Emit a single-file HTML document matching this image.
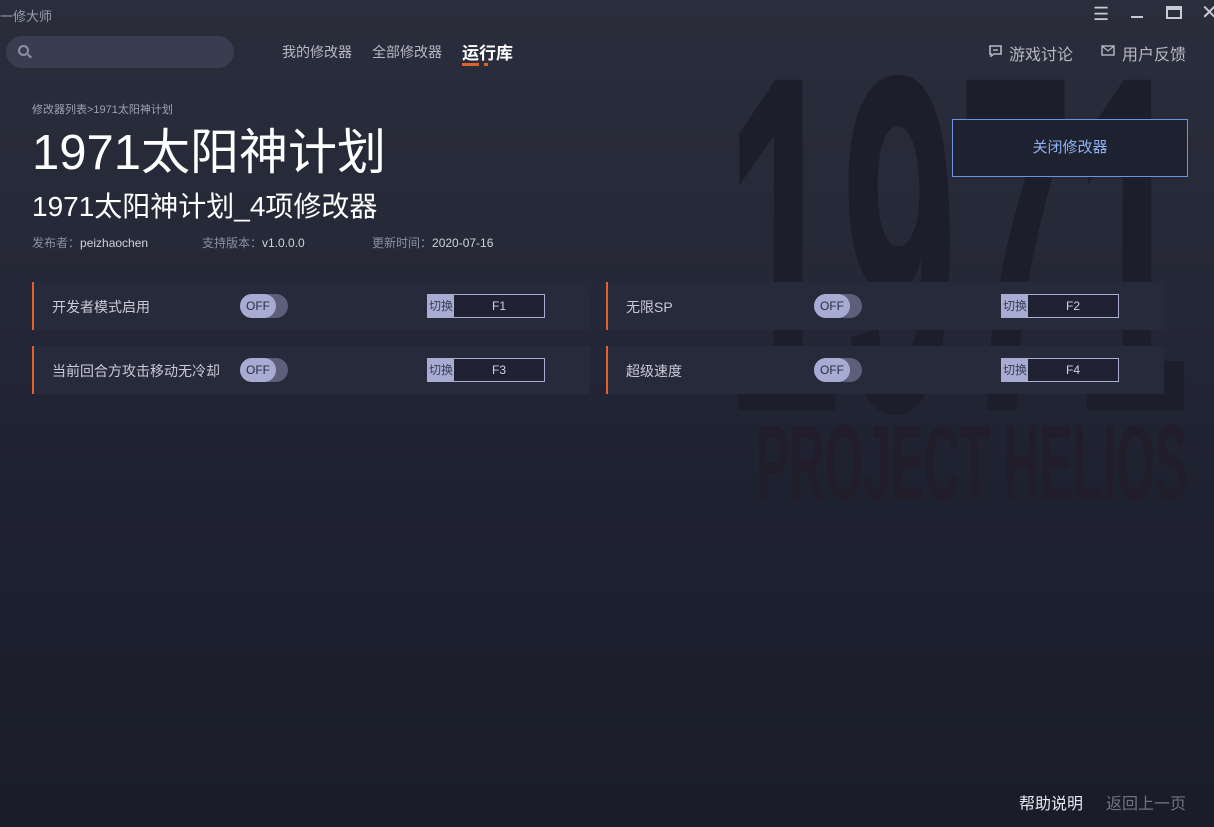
<!DOCTYPE html>
<html><head><meta charset="utf-8"><style>
*{margin:0;padding:0;box-sizing:border-box}
body{width:1214px;height:827px;overflow:hidden;position:relative;font-family:"Liberation Sans","Noto Sans CJK SC",sans-serif;background:linear-gradient(#2a2d3b 0%,#252836 35%,#1e2130 60%,#1a1c29 100%);color:#fff}
.a{position:absolute;white-space:nowrap}
.row{position:absolute;height:48px;background:#272a3b;border-left:2px solid #e0622a}
.row .l{position:absolute;left:18px;top:15px;font-size:14px;color:#c9cbd6}
.tg{position:absolute;top:12px;width:48px;height:24px;border-radius:12px;background:#5b5f7a}
.tg span{position:absolute;left:0;top:0;width:36px;height:24px;border-radius:12px;background:#a8acd2;color:#2a2d45;font-size:12px;line-height:24px;text-align:center}
.key{position:absolute;top:12px;width:118px;height:24px;border:1px solid #a9acd0;background:#202234}
.key b{position:absolute;left:0;top:0;width:26px;height:22px;background:#a8acd2;color:#3a3d55;font-weight:normal;font-size:12px;line-height:22px;text-align:center}
.key i{position:absolute;left:26px;right:0;top:0;font-style:normal;font-size:12px;line-height:22px;text-align:center;color:#d0d2e0}
</style></head><body>
<svg class="a" style="left:0;top:0" width="1214" height="827">
<text x="725" y="410" font-family="Liberation Sans" font-weight="bold" font-size="480" fill="#1c1e2b" textLength="465" lengthAdjust="spacingAndGlyphs">1971</text>
<text x="756" y="500" font-family="Liberation Sans" font-weight="bold" font-size="108" fill="#221d2a" textLength="432" lengthAdjust="spacingAndGlyphs">PROJECT HELIOS</text>
</svg>
<div class="a" style="left:0;top:6px;font-size:13px;color:#9a9dab">一修大师</div>
<div class="a" style="left:1093px;top:4px;font-size:18px;color:#c8cad4">☰</div>
<div class="a" style="left:1131px;top:16px;width:12px;height:2px;background:#c8cad4"></div>
<div class="a" style="left:1166px;top:6px;width:16px;height:13px;border:2px solid #c8cad4;border-top-width:4px"></div>
<div class="a" style="left:1201px;top:0px;font-size:20px;color:#c8cad4">✕</div>
<div class="a" style="left:6px;top:36px;width:228px;height:32px;border-radius:16px;background:#3a3d4f"></div>
<div class="a" style="left:18px;top:45px;width:11px;height:11px;border:2px solid #8e91a3;border-radius:50%"></div>
<div class="a" style="left:27px;top:55px;width:5px;height:2px;background:#8e91a3;transform:rotate(45deg)"></div>
<div class="a" style="left:282px;top:42px;font-size:14px;color:#b6b8c6">我的修改器</div>
<div class="a" style="left:372px;top:42px;font-size:14px;color:#b6b8c6">全部修改器</div>
<div class="a" style="left:462px;top:39px;font-size:17px;font-weight:bold;color:#fff">运行库</div>
<div class="a" style="left:462px;top:63px;width:17px;height:3px;background:#e0622a"></div>
<div class="a" style="left:484px;top:63px;width:4px;height:3px;background:#e0622a"></div>
<svg class="a" style="left:989px;top:45px" width="14" height="13"><path d="M1 1H12V9H5L2 11V9H1Z" fill="none" stroke="#b6b8c6" stroke-width="1.6"/><path d="M4 5H9" stroke="#b6b8c6" stroke-width="1.4"/></svg>
<div class="a" style="left:1009px;top:41px;font-size:16px;color:#b6b8c6">游戏讨论</div>
<svg class="a" style="left:1101px;top:45px" width="14" height="11"><rect x="1" y="1" width="12" height="9" fill="none" stroke="#b6b8c6" stroke-width="1.4"/><path d="M1 1L7 6L13 1" fill="none" stroke="#b6b8c6" stroke-width="1.2"/></svg>
<div class="a" style="left:1122px;top:41px;font-size:16px;color:#b6b8c6">用户反馈</div>
<div class="a" style="left:32px;top:101px;font-size:11px;color:#9ea1b3">修改器列表&gt;1971太阳神计划</div>
<div class="a" style="left:32px;top:124px;font-size:49px;color:#fff;line-height:58px">1971太阳神计划</div>
<div class="a" style="left:32px;top:190px;font-size:28px;color:#fff;line-height:34px">1971太阳神计划_4项修改器</div>
<div class="a" style="left:32px;top:234px;font-size:12px;color:#d0d2dc"><span style="color:#8d90a2">发布者：</span>peizhaochen</div>
<div class="a" style="left:202px;top:234px;font-size:12px;color:#d0d2dc"><span style="color:#8d90a2">支持版本：</span>v1.0.0.0</div>
<div class="a" style="left:372px;top:234px;font-size:12px;color:#d0d2dc"><span style="color:#8d90a2">更新时间：</span>2020-07-16</div>
<div class="a" style="left:952px;top:119px;width:236px;height:58px;border:1px solid #6b92e0;background:#1e2130;color:#8fb1f2;font-size:15px;line-height:56px;text-align:center">关闭修改器</div>

<div class="row" style="left:32px;top:282px;width:558px"><div class="l">开发者模式启用</div><div class="tg" style="left:206px"><span>OFF</span></div><div class="key" style="left:393px"><b>切换</b><i>F1</i></div></div>
<div class="row" style="left:606px;top:282px;width:558px"><div class="l">无限SP</div><div class="tg" style="left:206px"><span>OFF</span></div><div class="key" style="left:393px"><b>切换</b><i>F2</i></div></div>
<div class="row" style="left:32px;top:346px;width:558px"><div class="l">当前回合方攻击移动无冷却</div><div class="tg" style="left:206px"><span>OFF</span></div><div class="key" style="left:393px"><b>切换</b><i>F3</i></div></div>
<div class="row" style="left:606px;top:346px;width:558px"><div class="l">超级速度</div><div class="tg" style="left:206px"><span>OFF</span></div><div class="key" style="left:393px"><b>切换</b><i>F4</i></div></div>

<div class="a" style="left:1019px;top:790px;font-size:16px;color:#e6e7ee">帮助说明</div>
<div class="a" style="left:1106px;top:790px;font-size:16px;color:#6f7284">返回上一页</div>
</body></html>
